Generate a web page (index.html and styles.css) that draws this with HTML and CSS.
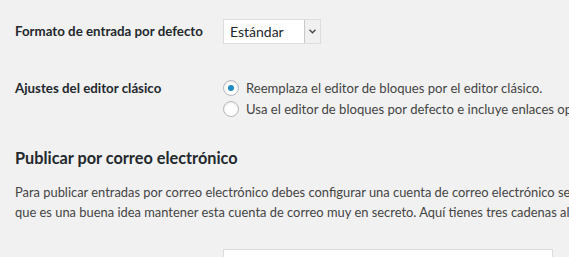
FILE: index.html
```html
<!DOCTYPE html>
<html lang="es">
<head>
  <meta charset="UTF-8" />
  <title>Ajustes de escritura</title>
  <link rel="stylesheet" href="styles.css">
</head>
<body>
  <div class="wrap">
    <div class="row row-format">
      <div class="label">Formato de entrada por defecto</div>
      <div class="field">
        <div class="select">
          <span class="select-value">Estándar</span>
          <span class="select-arrow">
            <svg width="7" height="5" viewBox="0 0 7 5"><path d="M0.5 0.8 L3.5 3.8 L6.5 0.8" fill="none" stroke="#444" stroke-width="1.3"/></svg>
          </span>
        </div>
      </div>
    </div>

    <div class="row row-editor">
      <div class="label">Ajustes del editor clásico</div>
      <div class="field">
        <label class="radio"><span class="dot checked"></span>Reemplaza el editor de bloques por el editor clásico.</label>
        <label class="radio"><span class="dot"></span>Usa el editor de bloques por defecto e incluye enlaces opcionales para volver al editor clásico.</label>
      </div>
    </div>

    <h2 class="title">Publicar por correo electrónico</h2>
    <p class="desc">Para publicar entradas por correo electrónico debes configurar una cuenta de correo electrónico secreta con acceso POP3. Cualquier correo recibido en esta dirección será publicado, así<br>que es una buena idea mantener esta cuenta de correo muy en secreto. Aquí tienes tres cadenas aleatorias que podrías usar: <code>k1Xq9vRt</code>, <code>Hs4bPz0w</code>, <code>m7TfLc2e</code>.</p>

    <div class="row row-server">
      <div class="label">Servidor de correo</div>
      <div class="field">
        <div class="input"></div>
      </div>
    </div>
  </div>
</body>
</html>
```

FILE: styles.css
```css
body {
  margin: 0;
  background: #f1f1f1;
  color: #23282d;
  font-family: Lato, "Open Sans", sans-serif;
  font-size: 13px;
  overflow: hidden;
}

.wrap {
  padding-left: 15px;
  width: 900px;
}

.row {
  display: flex;
}

.label {
  width: 208px;
  font-size: 13.3px;
  font-weight: 700;
  line-height: 21px;
  white-space: nowrap;
}

.row-format {
  padding-top: 19px;
  align-items: center;
}

.row-editor {
  margin-top: 34px;
}

.select {
  display: flex;
  width: 98px;
  height: 25px;
  background: #fff;
  border: 1px solid #ddd;
  box-sizing: border-box;
}

.select-value {
  flex: 1;
  padding-left: 6px;
  font-size: 14px;
  line-height: 23px;
}

.select-arrow {
  width: 15px;
  background: #f0f0f0;
  border-left: 1px solid #c8c8c8;
  display: flex;
  align-items: center;
  justify-content: center;
}

.radio {
  display: flex;
  align-items: center;
  height: 20.5px;
  font-size: 13.1px;
  white-space: nowrap;
  color: #444;
}

.dot {
  width: 14px;
  height: 14px;
  border: 1px solid #b4b9be;
  border-radius: 50%;
  background: #fff;
  margin-right: 7px;
  box-shadow: inset 0 1px 2px rgba(0, 0, 0, 0.1);
  position: relative;
}

.dot.checked::after {
  content: "";
  position: absolute;
  left: 4px;
  top: 4px;
  width: 6px;
  height: 6px;
  border-radius: 50%;
  background: #1e8cbe;
}

.title {
  margin: 27px 0 0;
  font-size: 16.3px;
  font-weight: 700;
  line-height: 24px;
}

.desc {
  margin: 12px 0 0;
  font-size: 12.9px;
  line-height: 20px;
  color: #444;
  white-space: nowrap;
}

.desc code {
  background: #e4e4e4;
  font-family: "Liberation Mono", monospace;
}

.row-server {
  margin-top: 25px;
}

.row-server .label {
  visibility: hidden;
}

.input {
  width: 330px;
  height: 28px;
  background: #fff;
  border: 1px solid #ddd;
  box-sizing: border-box;
}
```
